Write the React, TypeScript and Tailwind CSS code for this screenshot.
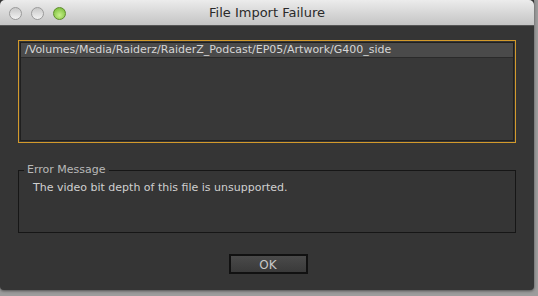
export default function App() {
  return (
    <div className="h-[296px] w-[538px] bg-[#9c9c9c] pr-[4px] pb-[6px]" style={{ fontFamily: '"DejaVu Sans", "Liberation Sans", sans-serif' }}>
      <div className="flex h-full w-full flex-col overflow-hidden rounded-b-[4px] bg-[#353535] shadow-[0_1px_3px_rgba(0,0,0,0.5)]">
        {/* Title bar */}
        <div className="relative flex h-[26px] items-center justify-center rounded-t-[5px] border-b border-[#555] bg-gradient-to-b from-[#ececec] to-[#c4c4c4]">
          <div className="absolute left-[9px] top-[7px] flex gap-[9px]">
            <span className="h-[13px] w-[13px] rounded-full border border-[#9a9a9a] bg-gradient-to-b from-[#c8c8c8] to-[#f2f2f2]" />
            <span className="h-[13px] w-[13px] rounded-full border border-[#9a9a9a] bg-gradient-to-b from-[#c8c8c8] to-[#f2f2f2]" />
            <span className="h-[13px] w-[13px] rounded-full border border-[#5f8d2c] bg-[radial-gradient(circle_at_50%_65%,#c8f08a,#6eb52e)]" />
          </div>
          <span className="text-[13px] text-[#2a2a2a]">File Import Failure</span>
        </div>

        <div className="flex flex-1 flex-col px-[18px] pt-[14px]">
          {/* File list */}
          <div className="h-[103px] border border-[#d39a2b] p-px">
            <div className="h-full border border-[#1f1f1f] bg-[#383838]">
              <div className="flex h-[15px] items-center border-b border-[#2a2a2a] bg-[#4a4a4a] px-[4px] text-[11px] text-[#d6d6d6]">
                /Volumes/Media/Raiderz/RaiderZ_Podcast/EP05/Artwork/G400_side
              </div>
            </div>
          </div>

          {/* Error message group */}
          <fieldset className="mt-[19px] h-[71px] border border-[#161616] px-[5px] pt-0">
            <legend className="px-[3px] text-[11px] text-[#b8b8b8]">Error Message</legend>
            <p className="mt-[1px] pl-[9px] text-[11px] text-[#d0d0d0]">The video bit depth of this file is unsupported.</p>
          </fieldset>

          {/* OK */}
          <div className="flex flex-1 items-start justify-center pt-[21px]">
            <button className="ml-[2px] h-[20px] w-[79px] border-2 border-[#111] bg-gradient-to-b from-[#4a4a4a] to-[#3a3a3a] text-[12px] text-[#c8c8c8]">
              OK
            </button>
          </div>
        </div>
      </div>
    </div>
  );
}
